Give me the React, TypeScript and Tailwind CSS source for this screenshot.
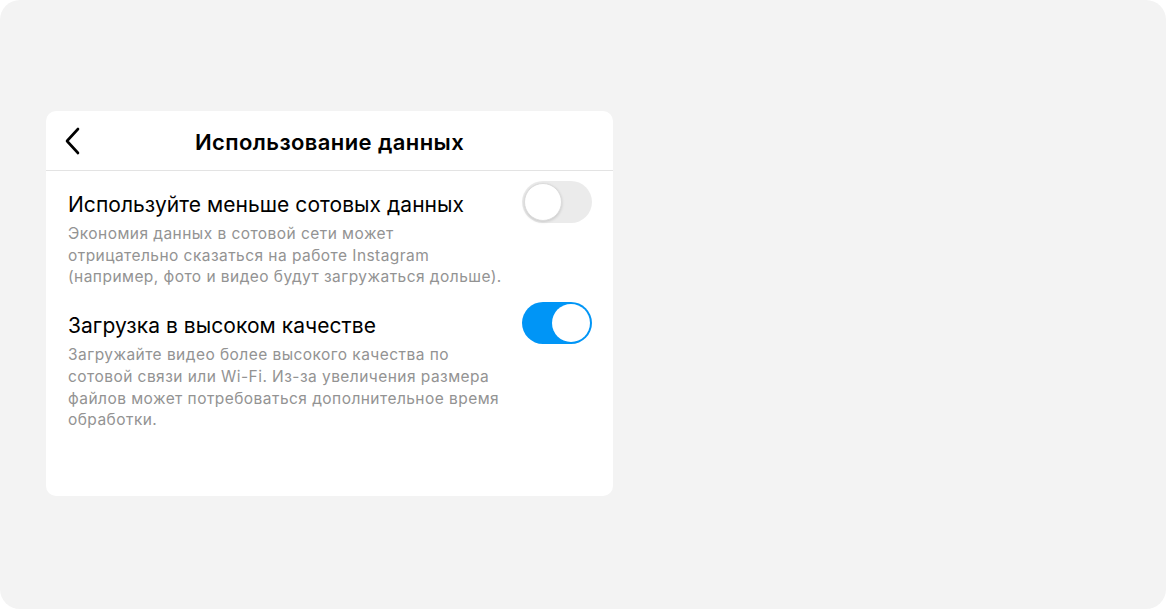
import { useState } from 'react';

function Toggle({ on }: { on: boolean }) {
  return (
    <div
      className={
        on
          ? 'w-[70px] h-[42px] rounded-full bg-[#0095f6] p-[2px] flex justify-end shrink-0'
          : 'w-[70px] h-[42px] rounded-full bg-[#ebebeb] p-[2px] flex justify-start shrink-0'
      }
    >
      <div
        className={
          on
            ? 'w-[38px] h-[38px] rounded-full bg-white'
            : 'w-[38px] h-[38px] rounded-full bg-white border border-[#dcdcdc] shadow-[0_1px_3px_rgba(0,0,0,0.15)]'
        }
      />
    </div>
  );
}

const settings = [
  {
    title: 'Используйте меньше сотовых данных',
    lines: [
      'Экономия данных в сотовой сети может',
      'отрицательно сказаться на работе Instagram',
      '(например, фото и видео будут загружаться дольше).',
    ],
    on: false,
  },
  {
    title: 'Загрузка в высоком качестве',
    lines: [
      'Загружайте видео более высокого качества по',
      'сотовой связи или Wi-Fi. Из-за увеличения размера',
      'файлов может потребоваться дополнительное время',
      'обработки.',
    ],
    on: true,
  },
];

export default function App() {
  const [items] = useState(settings);

  return (
    <div className="w-[1166px] h-[609px] bg-white">
      <div
        className="w-full h-full rounded-[20px] bg-[#f3f3f3] pt-[111px] pl-[46px]"
        style={{ fontFamily: 'Inter, "Noto Sans", sans-serif' }}
      >
        <div className="w-[567px] h-[385px] bg-white rounded-[10px] flex flex-col">
          {/* Header */}
          <div className="h-[60px] border-b border-[#e3e3e3] flex items-center relative">
            <svg
              className="absolute left-[18px]"
              width="18"
              height="28"
              viewBox="0 0 18 28"
              fill="none"
              stroke="#000"
              strokeWidth="2.6"
              strokeLinecap="round"
              strokeLinejoin="round"
            >
              <path d="M14 2 L3 14 L14 26" />
            </svg>
            <h1 className="w-full text-center text-[22px] leading-[28px] pt-[2px] font-semibold text-black tracking-[0.4px]">
              Использование данных
            </h1>
          </div>

          {/* Rows */}
          <div className="pl-[22px] pr-[21px] pt-[10px] flex flex-col gap-[14px]">
            {items.map((s) => (
              <div key={s.title} className="flex justify-between items-start">
                <div className="pt-[10px]">
                  <p className="text-[21px] leading-[28px] text-black tracking-[0.05px]">{s.title}</p>
                  <div className="mt-[4px] text-[15.5px] leading-[21.7px] text-[#939393] tracking-[0.45px] whitespace-nowrap">
                    {s.lines.map((l) => (
                      <p key={l}>{l}</p>
                    ))}
                  </div>
                </div>
                <Toggle on={s.on} />
              </div>
            ))}
          </div>
        </div>
      </div>
    </div>
  );
}
